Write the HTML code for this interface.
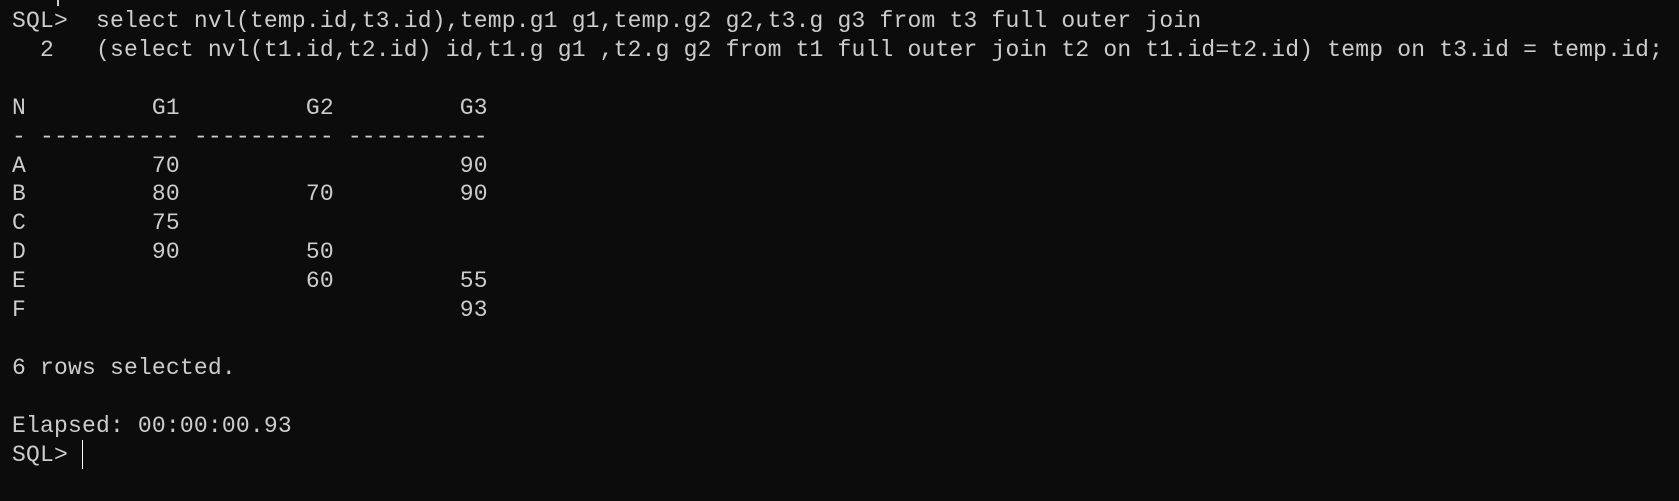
<!DOCTYPE html>
<html><head><meta charset="utf-8"><style>
html,body{margin:0;padding:0;background:#0c0c0c;width:1679px;height:501px;overflow:hidden}
pre{margin:0;position:absolute;left:12px;top:7px;font-family:"Liberation Mono",monospace;font-size:23px;line-height:28.9px;color:#cccccc;letter-spacing:0.19px}
.cur{position:absolute;left:82px;top:440px;width:1px;height:29px;background:#fff}
.tick{position:absolute;left:57px;top:0;width:2px;height:6px;background:#ccc}
</style></head><body>
<div class="tick"></div>
<pre>SQL>  select nvl(temp.id,t3.id),temp.g1 g1,temp.g2 g2,t3.g g3 from t3 full outer join
  2   (select nvl(t1.id,t2.id) id,t1.g g1 ,t2.g g2 from t1 full outer join t2 on t1.id=t2.id) temp on t3.id = temp.id;

N         G1         G2         G3
- ---------- ---------- ----------
A         70                    90
B         80         70         90
C         75
D         90         50
E                    60         55
F                               93

6 rows selected.

Elapsed: 00:00:00.93
SQL> </pre>
<div class="cur"></div>
</body></html>
